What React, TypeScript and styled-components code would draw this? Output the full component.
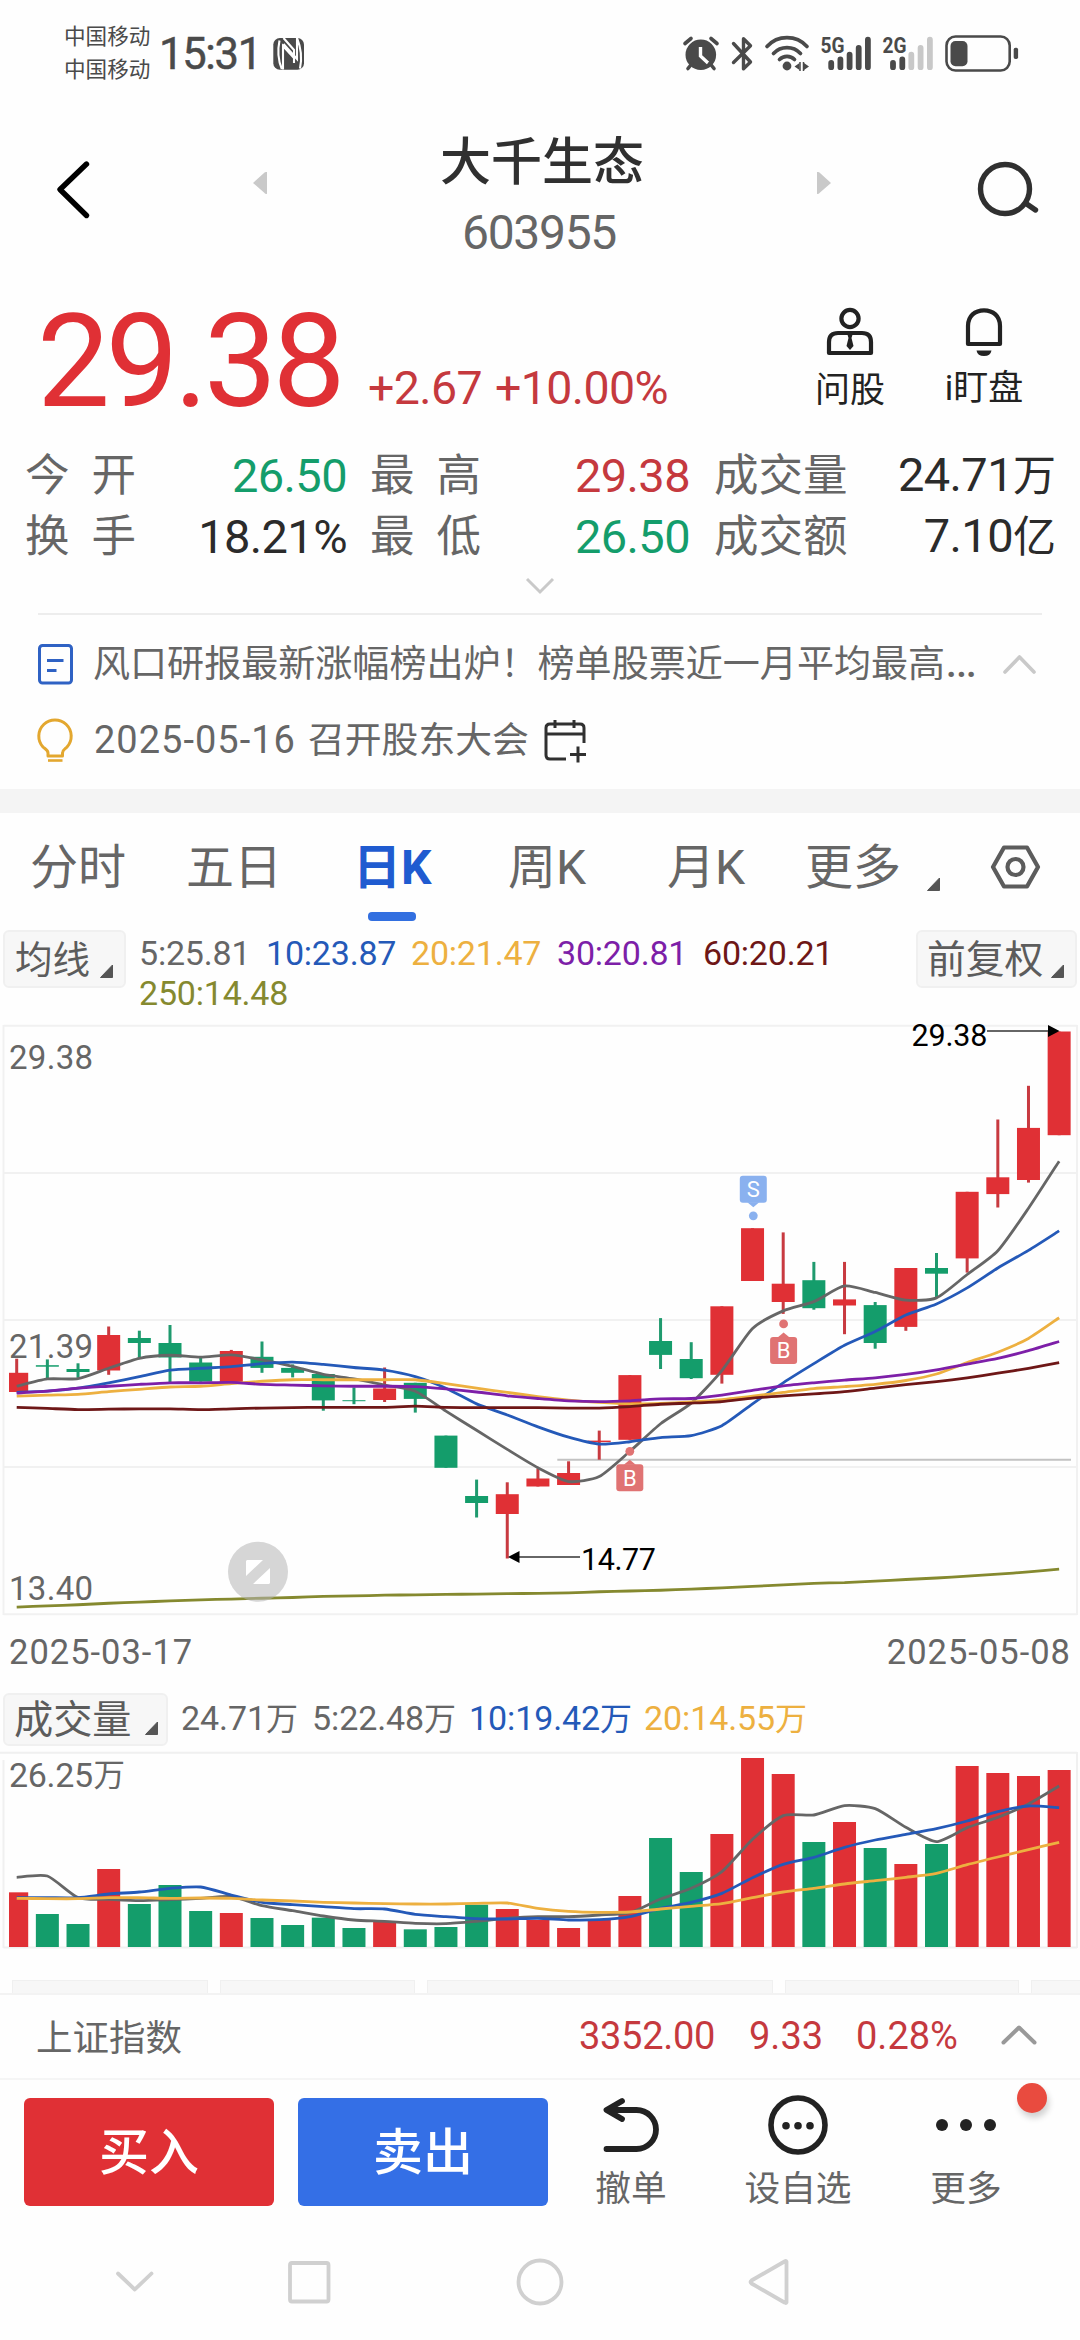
import React from 'react';
import styled, { createGlobalStyle } from 'styled-components';

const RED = '#e03035';
const GREEN = '#149d6b';
const INK = '#2b2b2b';
const GREY = '#666666';
const BLUE = '#2459b8';
const AMBER = '#edb040';
const PURPLE = '#7d1fa8';
const MAROON = '#6e1717';
const OLIVE = '#85892f';

const Global = createGlobalStyle`
  * { box-sizing: border-box; }
  body {
    margin: 0;
    background: #fdfdfd;
    font-family: Roboto, "Noto Sans CJK SC", sans-serif;
    color: ${GREY};
  }
  svg { display: block; flex: none; overflow: visible; }
`;

const Screen = styled.div`
  width: 1080px;
  height: 2340px;
  overflow: hidden;
  display: flex;
  flex-direction: column;
  background: #fefefe;
`;

const Label = styled.span<{ $size: number; $color?: string; $ls?: number; $mr?: number }>`
  font-size: ${p => p.$size}px;
  color: ${p => p.$color ?? GREY};
  letter-spacing: ${p => p.$ls ?? 0}px;
  margin-right: ${p => p.$mr ?? 0}px;
  white-space: nowrap;
`;

const StatusBar = styled.header`
  height: 100px;
  flex: none;
  display: flex;
  padding-left: 64px;
  align-items: flex-start;
`;

const Carriers = styled.div`
  display: flex;
  flex-direction: column;
  width: 95px;
  padding-top: 20px;
  font-size: 21.6px;
  line-height: 33px;
  color: #4a4a4a;
`;

const Clock = styled.div`
  width: 114px;
  padding-top: 29px;
  font-size: 43.5px;
  line-height: 52px;
  letter-spacing: -1.3px;
  color: #4a4a4a;
  -webkit-text-stroke: 0.5px #4a4a4a;
`;

const NavHeader = styled.div`
  height: 180px;
  flex: none;
  display: flex;
  justify-content: space-between;
  padding: 25px 42px 0 55px;
`;

const HeaderSide = styled.div<{ $pt: number }>`
  padding-top: ${p => p.$pt}px;
`;

const TitleBlock = styled.div`
  display: flex;
  align-items: flex-start;
  justify-content: space-between;
  width: 580px;
  margin-left: 17px;
`;

const TitleText = styled.div`
  display: flex;
  flex-direction: column;
  align-items: center;
  line-height: 70px;
`;

const Title = styled.h1`
  margin: 0;
  padding-top: 2px;
  font-size: 51px;
  font-weight: 500;
  line-height: 72px;
  color: #303030;
`;

const Code = styled.div`
  font-size: 48px;
  line-height: 68px;
  letter-spacing: -1.3px;
  color: ${GREY};
  margin-left: -6px;
`;

const Quote = styled.section`
  height: 164px;
  flex: none;
  display: flex;
  padding: 0 0 0 37px;
`;

const Price = styled.div`
  width: 331px;
  padding-top: 5px;
  font-size: 130px;
  line-height: 154px;
  letter-spacing: -4.5px;
  color: ${RED};
  white-space: nowrap;
`;

const Change = styled.div`
  width: 440px;
  padding-top: 78px;
  font-size: 46.5px;
  line-height: 60px;
  letter-spacing: -0.6px;
  word-spacing: 2px;
  color: #c5393e;
`;

const QuoteAction = styled.div<{ $w: number; $gap: number }>`
  width: ${p => p.$w}px;
  display: flex;
  flex-direction: column;
  align-items: center;
  padding-top: 27px;
  font-size: 35px;
  line-height: 40px;
  color: #222;
  gap: ${p => p.$gap}px;
  white-space: nowrap;
`;

const Stats = styled.section`
  height: 122px;
  flex: none;
  display: grid;
  grid-template-columns: 111px 211px 23px 111px 209px 24px 135px 207px;
  grid-template-rows: 61px 61px;
  align-items: center;
  padding-left: 25px;
`;

const StatName = styled.div`
  display: flex;
  justify-content: space-between;
  padding-top: 4px;
  font-size: 44.5px;
  line-height: 57px;
  white-space: nowrap;
  color: ${GREY};
`;

const StatValue = styled.div<{ $color: string }>`
  display: flex;
  justify-content: flex-end;
  align-items: baseline;
  padding-top: 2px;
  font-size: 47px;
  line-height: 59px;
  letter-spacing: -0.6px;
  color: ${p => p.$color};
  em { font-style: normal; font-size: 43px; letter-spacing: 0; }
`;

const Expand = styled.div`
  height: 49px;
  flex: none;
  display: flex;
  justify-content: center;
  padding-top: 10px;
  margin: 0 38px;
  border-bottom: 2px solid #ededed;
`;

const News = styled.section`
  height: 174px;
  flex: none;
  padding: 10px 43px 0 36px;
`;

const NewsRow = styled.div`
  height: 77px;
  display: flex;
  align-items: center;
  line-height: 77px;
`;

const NewsText = styled.div`
  width: 927px;
  padding: 2px 0 0 19px;
  font-size: 37.05px;
  white-space: nowrap;
`;

const Ellipsis = styled.span`
  font-size: 48px;
  line-height: 1;
`;

const NewsDate = styled.span`
  width: 234px;
  padding-left: 20px;
  font-size: 38px;
  letter-spacing: 1px;
`;

const Band = styled.div`
  height: 24px;
  flex: none;
  background: #f4f4f4;
`;

const Tabs = styled.nav`
  height: 113px;
  flex: none;
  display: flex;
  padding-left: 30px;
`;

const Tab = styled.div<{ $w: number; $active?: boolean }>`
  width: ${p => p.$w}px;
  padding-top: 22px;
  font-size: 48px;
  line-height: 66px;
  font-weight: ${p => (p.$active ? 700 : 400)};
  color: ${p => (p.$active ? '#1f5bd0' : GREY)};
  white-space: nowrap;
`;

const Underline = styled.div`
  width: 48px;
  height: 9px;
  margin: 11px 0 0 15px;
  border-radius: 4px;
  background: #326fe0;
`;

const IndicatorRow = styled.div<{ $h: number; $pt: number }>`
  height: ${p => p.$h}px;
  flex: none;
  display: flex;
  align-items: flex-start;
  padding: ${p => p.$pt}px 3px 0 3px;
`;

const Chip = styled.button<{ $w: number; $h: number; $size: number; $pl: number; $gap: number; $drop: number }>`
  width: ${p => p.$w}px;
  height: ${p => p.$h}px;
  flex: none;
  display: flex;
  align-items: center;
  gap: ${p => p.$gap}px;
  padding: 3px 0 0 ${p => p.$pl}px;
  border: 2px solid #f0f0f0;
  border-radius: 6px;
  background: #f7f7f7;
  font: 400 ${p => p.$size}px/1 Roboto, "Noto Sans CJK SC", sans-serif;
  color: #5c5c5c;
  white-space: nowrap;
  svg { margin-top: ${p => p.$drop}px; }
`;

const MaList = styled.div`
  width: 790px;
  padding-left: 13px;
  padding-top: 3px;
  display: flex;
  flex-wrap: wrap;
  line-height: 40px;
`;

const MaItem = styled.span<{ $w: number; $color: string }>`
  width: ${p => p.$w}px;
  font-size: 34px;
  letter-spacing: -0.2px;
  color: ${p => p.$color};
`;

const ChartFrame = styled.div<{ $h: number }>`
  height: ${p => p.$h}px;
  flex: none;
`;

const Dates = styled.div`
  height: 70px;
  flex: none;
  display: flex;
  justify-content: space-between;
  padding: 0 9px 0 9px;
  font-size: 34.5px;
  line-height: 65px;
  letter-spacing: 1px;
`;

const VolumeList = styled.div`
  display: flex;
  padding-left: 13px;
  line-height: 50px;
`;

const VolumeItem = styled.span<{ $w: number; $color: string }>`
  width: ${p => p.$w}px;
  font-size: 34px;
  letter-spacing: -0.1px;
  white-space: nowrap;
  color: ${p => p.$color};
  em { font-style: normal; font-size: 32px; }
`;

const PeekRow = styled.div`
  height: 13px;
  flex: none;
  display: flex;
  gap: 12px;
  padding-left: 12px;
`;

const PeekCard = styled.div<{ $w: number }>`
  width: ${p => p.$w}px;
  flex: none;
  border: 1px solid #f0f0f0;
  border-bottom: 0;
  background: #f7f7f7;
`;

const IndexBar = styled.div`
  height: 87px;
  flex: none;
  display: flex;
  align-items: center;
  padding: 0 0 2px 36px;
  border-top: 2px solid #f3f3f3;
  border-bottom: 2px solid #f5f5f5;
`;

const Cell = styled.div<{ $w: number }>`
  width: ${p => p.$w}px;
  display: flex;
`;

const Actions = styled.div`
  height: 150px;
  flex: none;
  display: flex;
  align-items: flex-start;
  padding: 18px 0 0 24px;
`;

const TradeButton = styled.button<{ $bg: string }>`
  width: 250px;
  height: 108px;
  flex: none;
  margin-right: 24px;
  padding: 3px 0 0;
  border: 0;
  border-radius: 6px;
  background: ${p => p.$bg};
  color: #fff;
  font: 500 50px/105px Roboto, "Noto Sans CJK SC", sans-serif;
`;

const Tool = styled.div<{ $w: number; $ml: number }>`
  position: relative;
  width: ${p => p.$w}px;
  margin-left: ${p => p.$ml}px;
  flex: none;
  display: flex;
  flex-direction: column;
  align-items: center;
  font-size: 35.7px;
  line-height: 50px;
  color: ${GREY};
  white-space: nowrap;
  svg { margin: -4px 0 8px; }
`;

const Badge = styled.i`
  position: absolute;
  right: 0;
  top: -15px;
  width: 30px;
  height: 30px;
  border-radius: 50%;
  background: #e94b3f;
  box-shadow: 2px 5px 6px rgba(0, 0, 0, 0.18);
`;

const SystemNav = styled.footer`
  flex: 1;
  display: flex;
  padding: 25px 0 0 115px;
`;

const CENTER = (i: number) => 16.7 + 30.66 * i;

// [rising, high, body top, body bottom, low] for each trading day
const CANDLES: [number, number, number, number, number][] = [
  [1, 338.7, 352.8, 372, 372], [0, 339.4, 345.2, 346.7, 358.6], [0, 343.3, 349, 352, 357.8],
  [1, 306.5, 315, 350.5, 354.8], [0, 310.7, 318, 323, 337.9], [0, 305, 323, 337.5, 362.4],
  [0, 337.5, 342.5, 361.6, 361.6], [1, 329.9, 331, 362.4, 362.4], [0, 321.5, 336.8, 347.9, 352.8],
  [0, 344.4, 347.9, 352.8, 357.4], [0, 354, 354, 380.4, 390.7], [0, 367.4, 380.2, 381.2, 384.2],
  [1, 347.5, 368.5, 380, 382], [0, 362.8, 362.8, 378.9, 392.6], [0, 415.6, 415.6, 447.8, 447.8],
  [0, 459.6, 476, 483, 497.5], [1, 462.3, 474.2, 494, 538.5], [1, 448.5, 458.5, 466.5, 466.5],
  [1, 441.3, 453, 465, 465], [1, 410.6, 420.6, 422.1, 439.7], [1, 355.1, 355.1, 419.8, 419.8],
  [0, 298.1, 321, 334.9, 349], [0, 322.2, 339, 358.2, 359], [1, 286.3, 286.3, 354.8, 363.6],
  [1, 208.2, 208.2, 261, 261], [1, 212.4, 263.7, 282, 293.9], [0, 241.9, 260.2, 288.2, 289.7],
  [1, 241.9, 279.4, 285.5, 314.2], [0, 282, 285.1, 323, 328.7], [1, 248, 248, 306.9, 310.8],
  [0, 233, 248, 253.7, 277], [1, 171.8, 171.8, 238.4, 252.6], [1, 99.5, 157.3, 174.1, 187.5],
  [1, 65.8, 107.9, 160, 162.6], [1, 11.5, 11.5, 115.2, 115.2],
];

const PRICE_LINES: { color: string; data: number[] }[] = [
  { color: OLIVE, data: [1534, 1531, 1528, 1524, 1521, 1518, 1515, 1513, 1511, 1509, 1506, 1505, 1503, 1502, 1501, 1500, 1499, 1498, 1497, 1494, 1492, 1490, 1487, 1484, 1480, 1476, 1472, 1470, 1466, 1462, 1458, 1453, 1448, 1442, 1435] },
  { color: '#666', data: [957, 938, 937, 910, 884, 876, 881, 875, 888, 905, 926, 938, 954, 970, 1022, 1072, 1122, 1170, 1206, 1193, 1127, 1055, 1001, 916, 806, 760, 736, 695, 712, 732, 726, 665, 603, 492, 369] },
  { color: BLUE, data: [973, 970, 962, 948, 932, 915, 910, 906, 898, 894, 900, 908, 915, 932, 962, 1003, 1032, 1063, 1090, 1108, 1102, 1091, 1086, 1060, 1003, 948, 898, 850, 814, 771, 742, 700, 648, 602, 551] },
  { color: AMBER, data: [983, 980, 978, 971, 965, 959, 957, 950, 944, 940, 940, 940, 940, 940, 950, 962, 973, 984, 993, 999, 1003, 1002, 998, 992, 983, 973, 963, 958, 952, 942, 925, 895, 868, 832, 778] },
  { color: PURPLE, data: [975, 970, 962, 957, 952, 948, 948, 947, 952, 954, 956, 957, 957, 958, 964, 972, 982, 989, 995, 997, 995, 990, 989, 980, 968, 956, 948, 941, 935, 926, 914, 899, 884, 864, 840] },
  { color: MAROON, data: [1012, 1015, 1018, 1017, 1016, 1016, 1018, 1016, 1014, 1013, 1012, 1012, 1012, 1009, 1012, 1013, 1013, 1013, 1014, 1014, 1010, 1004, 1001, 997, 988, 982, 977, 971, 962, 953, 945, 935, 923, 910, 895] },
];

const VOLUME_TOPS = [877, 942, 972, 807, 912, 855, 933, 939, 954, 975, 953, 984, 963, 988, 981, 914, 927, 960, 984, 957, 888, 714, 816, 702, 474, 522, 726, 666, 744, 792, 732, 498, 519, 528, 510];

const VOLUME_LINES: { color: string; data: number[] }[] = [
  { color: '#666', data: [832, 828, 893, 898, 902, 899, 895, 890, 917, 932, 948, 960, 964, 970, 971, 964, 955, 950, 950, 945, 938, 897, 865, 815, 718, 647, 645, 617, 626, 682, 725, 683, 652, 612, 558] },
  { color: BLUE, data: [893, 893, 893, 882, 876, 865, 861, 885, 907, 914, 920, 926, 927, 943, 950, 956, 957, 955, 960, 959, 950, 925, 907, 880, 833, 793, 772, 742, 720, 703, 686, 663, 635, 618, 623] },
  { color: AMBER, data: [895, 896, 896, 893, 893, 895, 894, 895, 900, 903, 907, 909, 911, 912, 912, 910, 909, 925, 934, 937, 936, 927, 919, 911, 893, 876, 865, 852, 842, 832, 820, 794, 771, 749, 727] },
];

// Catmull-Rom smoothing with a low tension keeps the averages soft at the day points
function smooth(data: number[], scale: number, offset: number) {
  const pts = data.map((v, i) => [CENTER(i), v / scale - offset]);
  let d = `M${pts[0][0]} ${pts[0][1]}`;
  for (let i = 0; i < pts.length - 1; i++) {
    const a = pts[Math.max(i - 1, 0)];
    const b = pts[i];
    const c = pts[i + 1];
    const e = pts[Math.min(i + 2, pts.length - 1)];
    const t = 0.11;
    d += `C${b[0] + (c[0] - a[0]) * t} ${b[1] + (c[1] - a[1]) * t} ${c[0] - (e[0] - b[0]) * t} ${c[1] - (e[1] - b[1]) * t} ${c[0]} ${c[1]}`;
  }
  return d;
}

const Marker = ({ x, y, kind }: { x: number; y: number; kind: 'S' | 'B' }) => {
  const color = kind === 'S' ? '#8ab1ef' : '#e07373';
  const down = kind === 'S';
  return (
    <g fill={color}>
      <rect x={x - 13.5} y={y} width="27" height="27" rx="3" />
      {down ? <path d={`M${x - 6} ${y + 26.5}h12l-6 5z`} /> : <path d={`M${x - 6} ${y + 0.5}h12l-6 -5z`} />}
      <circle cx={x} cy={down ? y + 40 : y - 13} r="4.4" />
      <text x={x} y={y + 21.5} fill="#fff" fontSize="22" textAnchor="middle">{kind}</text>
    </g>
  );
};

const PriceChart = () => (
  <svg width="1080" height="600" viewBox="0 0 1080 600">
    <g stroke="#f1f1f1" strokeWidth="2">
      {[5.7, 153, 300, 447, 594.3].map(y => <path key={y} d={`M3.5 ${y}H1077`} />)}
      <path d="M3.5 5V595M1077 5V595" />
    </g>
    <g fontSize="33" fill={GREY}>
      <text x="9" y="49" textLength="84">29.38</text>
      <text x="9" y="337.5" textLength="84">21.39</text>
      <text x="9" y="580" textLength="84">13.40</text>
    </g>
    <path d="M557.3 439.8H1071" stroke="#c2c2c2" strokeWidth="2" />
    {CANDLES.map(([up, high, top, bottom, low], i) => {
      const x = CENTER(i);
      const left = i === 0 ? 9 : x - 11.5;
      return (
        <g key={i} fill={up ? RED : GREEN}>
          <rect x={x - 1.5} y={high} width="3" height={low - high} fill={up ? '#c83a40' : '#1f9a6e'} />
          <rect x={left} y={top} width={x + 11.5 - left} height={bottom - top} />
        </g>
      );
    })}
    {PRICE_LINES.map(l => (
      <path key={l.color} d={smooth(l.data, 2.613, 0)} fill="none" stroke={l.color} strokeWidth="2.8" />
    ))}
    <Marker x={753.3} y={155.8} kind="S" />
    <Marker x={783.6} y={316.9} kind="B" />
    <Marker x={629.8} y={444.3} kind="B" />
    <g stroke="#666" strokeWidth="1.8"><path d="M515 537H580M987 11H1050" /></g>
    <path d="M508 537l11.5-6v12zM1059.5 11l-11.5-6v12z" fill="#000" />
    <g fontSize="30.5" fill="#000">
      <text x="581" y="549.5" textLength="75">14.77</text>
      <text x="911.5" y="26" textLength="76">29.38</text>
    </g>
    <circle cx="258" cy="551.8" r="30" fill="#b4b4b4" fillOpacity="0.55" />
    <path d="M247 540h16l-17 16v-15zM270 548v15l-1 1h-16z" fill="#fff" />
  </svg>
);

const VolumeChart = () => (
  <svg width="1080" height="228" viewBox="0 0 1080 228">
    <path d="M3.5 8V196M1077 0V196M0 0.8H1077M3.5 195.6H1077" stroke="#f0f0f0" strokeWidth="2" fill="none" />
    <text x="9" y="34.7" fontSize="34" fill={GREY} textLength="84">26.25</text>
    <text x="93.5" y="34" fontSize="31.5" fill={GREY}>万</text>
    {VOLUME_TOPS.map((v, i) => {
      const x = CENTER(i);
      const left = i === 0 ? 9 : x - 11.5;
      const y = v / 3 - 152;
      return <rect key={i} x={left} y={y} width={x + 11.5 - left} height={195 - y} fill={CANDLES[i][0] ? RED : GREEN} />;
    })}
    {VOLUME_LINES.map(l => (
      <path key={l.color} d={smooth(l.data, 3, 152)} fill="none" stroke={l.color} strokeWidth="2.8" />
    ))}
  </svg>
);

const Corner = () => (
  <svg width="13" height="13" viewBox="0 0 13 13"><path d="M12.5 0V12.5H0.5z" fill="#555" stroke="#555" strokeLinejoin="round" /></svg>
);

const StatusIcons = () => (
  <svg width="807" height="100" viewBox="273 0 807 100" fill="none" stroke="#4a4a4a">
    <rect x="273.3" y="38" width="30.7" height="31.7" rx="6.5" fill="#4a4a4a" stroke="none" />
    <path d="M279.500 40.500C277.500 50 278 60 281.800 69M283 69.500V46L294 58V63M283.500 38L294 50V60M300 68.500C302 59 301.500 49 297 38M297 38V59L283.500 44" stroke="#fff" strokeWidth="2.1" />
    <circle cx="700.8" cy="54.7" r="15.3" fill="#4a4a4a" stroke="none" />
    <path d="M700.5 47V56L708 63" stroke="#fff" strokeWidth="3.4" />
    <path d="M685 43.500l6-5M717 43.500l-6-5M688 68.500l4-5M714 68.500l-4-5" strokeWidth="3.6" strokeLinecap="round" />
    <path d="M733.5 43.500L750.5 62l-7 6.800V38.700l7 7L733.500 62.500" strokeWidth="3.4" strokeLinecap="round" strokeLinejoin="round" />
    <path d="M767 46.500a27 27 0 0 1 40 0M773.500 53.500a18.500 18.500 0 0 1 27 0M779.500 59.500a10.500 10.500 0 0 1 15 0" strokeWidth="3.7" strokeLinecap="round" />
    <circle cx="787" cy="66" r="4.4" fill="#4a4a4a" stroke="none" />
    <path d="M794.500 66.500l5-3.500v7zM809 66.500l-5-3.500v7z" fill="#4a4a4a" stroke="none" />
    <path d="M800 62v9M803.500 62v9" strokeWidth="1.500" />
    <g fill="#4a4a4a" stroke="none" fontSize="22.5" fontWeight="700">
      <text x="820.5" y="53.3" textLength="24" lengthAdjust="spacingAndGlyphs">5G</text>
      <text x="882.5" y="53.3" textLength="24" lengthAdjust="spacingAndGlyphs">2G</text>
    </g>
    <g strokeWidth="5.8" strokeLinecap="round">
      <path d="M831.2 63V67.200M840.4 59.500V67.200M849.6 54.700V67.200M858.7 48V67.200M867.9 39.700V67.200" />
      <path d="M893 63V67.200M902.3 59.500V67.200" />
      <path d="M911.3 54.700V67.200M920.6 48V67.200M929.9 39.700V67.200" stroke="#c8c8c8" />
    </g>
    <rect x="946.5" y="36.5" width="63.2" height="34" rx="9" strokeWidth="2.6" />
    <rect x="950.5" y="41" width="17" height="25.2" rx="5" fill="#4a4a4a" stroke="none" />
    <rect x="1013.7" y="47.7" width="4.4" height="11.4" rx="1.8" fill="#4a4a4a" stroke="none" />
  </svg>
);

const stats = [
  ['今', '开', '26.50', '', GREEN], ['最', '高', '29.38', '', '#c5393e'], ['成交量', '', '24.71', '万', INK],
  ['换', '手', '18.21%', '', INK], ['最', '低', '26.50', '', GREEN], ['成交额', '', '7.10', '亿', INK],
];

export default function App() {
  return (
    <>
      <Global />
      <Screen>
        <StatusBar>
          <Carriers><span>中国移动</span><span>中国移动</span></Carriers>
          <Clock>15:31</Clock>
          <StatusIcons />
        </StatusBar>

        <NavHeader>
          <HeaderSide $pt={34}>
            <svg width="36" height="62" viewBox="55 159 36 62" fill="none" stroke="#000" strokeWidth="5.4" strokeLinecap="round" strokeLinejoin="round"><path d="M86.500 164L60 189.500L86.500 215.500" /></svg>
          </HeaderSide>
          <TitleBlock>
            <HeaderSide $pt={46}>
              <svg width="16" height="24" viewBox="0 0 16 24"><path d="M15 1V23Q13 23 12 21.500L1 12L12 2Q13 .5 15 1z" fill="#c9c9c9" /></svg>
            </HeaderSide>
            <TitleText>
              <Title>大千生态</Title>
              <Code>603955</Code>
            </TitleText>
            <HeaderSide $pt={46}>
              <svg width="16" height="24" viewBox="0 0 16 24"><path d="M1 1V23Q3 23 4 21.500L15 12L4 2Q3 .5 1 1z" fill="#c9c9c9" /></svg>
            </HeaderSide>
          </TitleBlock>
          <HeaderSide $pt={35}>
            <svg width="62" height="58" viewBox="976 160 62 58" fill="none" stroke="#303030" strokeWidth="5.4" strokeLinecap="round"><circle cx="1005" cy="189" r="24.5" /><path d="M1026 203.500l9.500 6.500" /></svg>
          </HeaderSide>
        </NavHeader>

        <Quote>
          <Price>29.38</Price>
          <Change>+2.67 +10.00%</Change>
          <QuoteAction $w={84} $gap={14}>
            <svg width="48" height="50" viewBox="0 0 48 50" fill="none" stroke="#222" strokeWidth="4.2"><circle cx="24" cy="11.5" r="8.6" /><path d="M3 46V35Q3 26 12 26H36Q45 26 45 35V46z" strokeLinejoin="round" /><path d="M21 26h6l-1.500 5l2 8l-3.500 4l-3.500-4l2-8z" fill="#222" stroke="none" /></svg>
            <span>问股</span>
          </QuoteAction>
          <QuoteAction $w={184} $gap={12}>
            <svg width="44" height="50" viewBox="0 0 44 50" fill="none" stroke="#222" strokeWidth="4.2"><path d="M6 37V19C6 9 13 3.300 22 3.300S38 9 38 19V37z" strokeLinejoin="round" /><path d="M14.500 43.500h15Q28.500 49 22 49T14.500 43.500z" fill="#222" stroke="none" /></svg>
            <span>i盯盘</span>
          </QuoteAction>
        </Quote>

        <Stats>
          {stats.map(([a, b, v, unit, color], i) => (
            <React.Fragment key={i}>
              {i % 3 !== 0 && <span />}
              <StatName><span>{a}</span><span>{b}</span></StatName>
              <StatValue $color={color}>{v}{unit && <em>{unit}</em>}</StatValue>
            </React.Fragment>
          ))}
        </Stats>

        <Expand>
          <svg width="32" height="20" viewBox="0 0 32 20" fill="none" stroke="#c9c9c9" strokeWidth="3"><path d="M3 3L16 16L29 3" /></svg>
        </Expand>

        <News>
          <NewsRow>
            <svg width="38" height="44" viewBox="0 0 38 44" fill="none" stroke="#2f62c4" strokeWidth="3"><rect x="3.5" y="3.5" width="32" height="37.5" rx="3" /><path d="M11 18.500h16.500M11 28.500h9.500" /></svg>
            <NewsText>风口研报最新涨幅榜出炉！榜单股票近一月平均最高<Ellipsis>…</Ellipsis></NewsText>
            <svg width="36" height="24" viewBox="0 0 36 24" fill="none" stroke="#c9c9c9" strokeWidth="3.6" strokeLinecap="round" strokeLinejoin="round"><path d="M4 20L18.500 5L33 20" /></svg>
          </NewsRow>
          <NewsRow>
            <svg width="38" height="46" viewBox="0 0 38 46" fill="none" stroke="#e3a72f" strokeWidth="3"><path d="M12 38V35C12 32 9 31 7 29A16.200 16.200 0 1 1 31 29C29 31 26.500 32 26.500 35V38z" strokeLinejoin="round" /><path d="M12 42.500h14.500" strokeWidth="2.6" /></svg>
            <NewsDate>2025-05-16</NewsDate>
            <Label $size={36.8} $mr={14}>召开股东大会</Label>
            <svg width="44" height="44" viewBox="0 0 44 44" fill="none" stroke="#303030" strokeWidth="3"><path d="M41 24V9Q41 5 37 5H7Q3 5 3 9V36Q3 40 7 40H23M3 15H41M12 1V9M31 1V9M27 35.500H43M35 27.500V43.500" /></svg>
          </NewsRow>
        </News>

        <Band />

        <Tabs>
          <Tab $w={156}>分时</Tab>
          <Tab $w={167}>五日</Tab>
          <Tab $w={155} $active>日K<Underline /></Tab>
          <Tab $w={159}>周K</Tab>
          <Tab $w={138}>月K</Tab>
          <Tab $w={122}>更多</Tab>
          <HeaderSide $pt={65}><Corner /></HeaderSide>
          <HeaderSide $pt={30}>
            <svg width="110" height="48" viewBox="939 0 110 48" fill="none" stroke="#5c5c5c" strokeWidth="4.2" strokeLinejoin="round"><path d="M992 24L1003 4.500H1026L1037 24L1026 43.500H1003z" /><circle cx="1014.5" cy="24" r="8" /></svg>
          </HeaderSide>
        </Tabs>

        <IndicatorRow $h={94} $pt={4}>
          <Chip $w={123} $h={58} $size={37.5} $pl={10} $gap={10} $drop={22}>均线<Corner /></Chip>
          <MaList>
            <MaItem $w={127} $color={GREY}>5:25.81</MaItem>
            <MaItem $w={145} $color={BLUE}>10:23.87</MaItem>
            <MaItem $w={146} $color={AMBER}>20:21.47</MaItem>
            <MaItem $w={146} $color={PURPLE}>30:20.81</MaItem>
            <MaItem $w={146} $color={MAROON}>60:20.21</MaItem>
            <MaItem $w={160} $color={OLIVE}>250:14.48</MaItem>
          </MaList>
          <Chip $w={161} $h={58} $size={38.8} $pl={9} $gap={8} $drop={22}>前复权<Corner /></Chip>
        </IndicatorRow>

        <ChartFrame $h={600}><PriceChart /></ChartFrame>

        <Dates><span>2025-03-17</span><span>2025-05-08</span></Dates>

        <IndicatorRow $h={62} $pt={3}>
          <Chip $w={165} $h={53} $size={39.2} $pl={9} $gap={13} $drop={14}>成交量<Corner /></Chip>
          <VolumeList>
            <VolumeItem $w={131} $color={GREY}>24.71<em>万</em></VolumeItem>
            <VolumeItem $w={157} $color={GREY}>5:22.48<em>万</em></VolumeItem>
            <VolumeItem $w={175} $color={BLUE}>10:19.42<em>万</em></VolumeItem>
            <VolumeItem $w={170} $color={AMBER}>20:14.55<em>万</em></VolumeItem>
          </VolumeList>
        </IndicatorRow>

        <ChartFrame $h={228}><VolumeChart /></ChartFrame>

        <PeekRow>
          {[196, 195, 346, 234, 60].map(w => <PeekCard key={w} $w={w} />)}
        </PeekRow>

        <IndexBar>
          <Cell $w={543}><Label $size={36.5}>上证指数</Label></Cell>
          <Cell $w={170}><Label $size={38} $color="#c5393e" $ls={-0.3}>3352.00</Label></Cell>
          <Cell $w={107}><Label $size={38} $color="#c5393e">9.33</Label></Cell>
          <Cell $w={145}><Label $size={38} $color="#c5393e">0.28%</Label></Cell>
          <svg width="36" height="24" viewBox="0 0 36 24" fill="none" stroke="#999" strokeWidth="4" strokeLinecap="round" strokeLinejoin="round"><path d="M2.500 18.500L18 3.500L33.500 18.500" /></svg>
        </IndexBar>

        <Actions>
          <TradeButton $bg={RED}>买入</TradeButton>
          <TradeButton $bg="#346fe6">卖出</TradeButton>
          <Tool $w={74} $ml={22}>
            <svg width="64" height="62" viewBox="600 2094 64 62" fill="none" stroke="#222" strokeWidth="5.8" strokeLinecap="round" strokeLinejoin="round"><path d="M607.500 2149H637.500A19.500 19.500 0 0 0 637.500 2110H608M623 2101L607.500 2110L623 2119" /></svg>
            撤单
          </Tool>
          <Tool $w={110} $ml={75}>
            <svg width="64" height="62" viewBox="766 2094 64 62" fill="none" stroke="#222" strokeWidth="5.6"><circle cx="798" cy="2125" r="27" /><g fill="#222" stroke="none"><circle cx="786" cy="2125.7" r="3.8" /><circle cx="798" cy="2125.7" r="3.8" /><circle cx="810" cy="2125.7" r="3.8" /></g></svg>
            设自选
          </Tool>
          <Tool $w={162} $ml={32}>
            <svg width="64" height="62" viewBox="934 2094 64 62" fill="#222"><circle cx="942" cy="2125" r="6" /><circle cx="966" cy="2125" r="6" /><circle cx="990" cy="2125" r="6" /></svg>
            更多
            <Badge />
          </Tool>
        </Actions>

        <SystemNav>
          <svg width="700" height="54" viewBox="115 2255 700 54" fill="none" stroke="#d0d0d0" strokeWidth="3.8" strokeLinecap="round" strokeLinejoin="round">
            <path d="M118 2273.500L134.800 2289.500L151.500 2273.500" />
            <rect x="290" y="2263" width="38.5" height="38.5" rx="2" />
            <circle cx="540" cy="2282" r="21.5" />
            <path d="M786.500 2261.500V2302.500Q786 2303.500 784.500 2302.500L751.500 2283.500Q749.500 2282 751.500 2280.500L784.500 2261.500Q786 2260.500 786.500 2261.500z" />
          </svg>
        </SystemNav>
      </Screen>
    </>
  );
}
